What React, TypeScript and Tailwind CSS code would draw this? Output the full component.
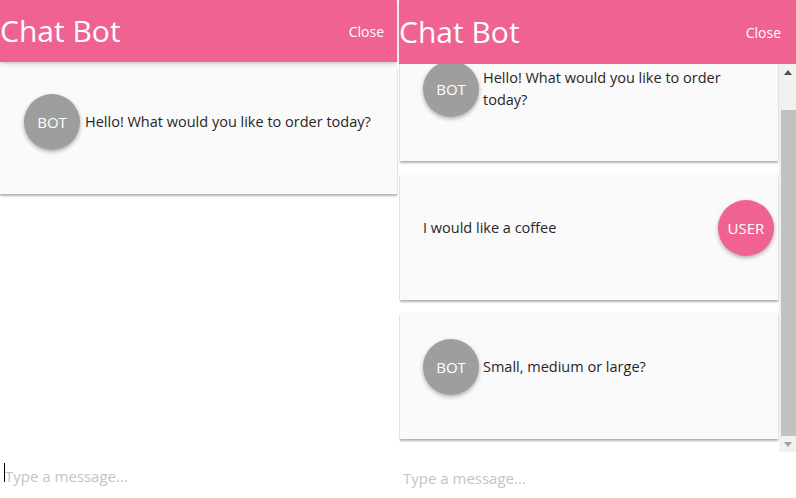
import React from "react";

function Avatar({ label, user }: { label: string; user?: boolean }) {
  return (
    <div
      className={
        user
          ? "flex h-14 w-14 shrink-0 items-center justify-center rounded-full bg-[#f06292] text-[15px] text-white shadow-[0_2px_4px_rgba(0,0,0,0.3)]"
          : "flex h-14 w-14 shrink-0 items-center justify-center rounded-full bg-[#9e9e9e] text-[15px] text-white shadow-[0_2px_4px_rgba(0,0,0,0.3)]"
      }
    >
      {label}
    </div>
  );
}

export default function App() {
  const card =
    "bg-[#fafafa] shadow-[0_0_1px_rgba(0,0,0,0.12),0_2px_2px_rgba(0,0,0,0.3)]";
  const msg = "text-[14.5px] leading-[22px] text-[#262626]";
  return (
    <div className="flex h-[498px] w-[796px] gap-[2px] overflow-hidden bg-white font-['Open_Sans',sans-serif]">
      {/* Left panel */}
      <div className="flex h-full w-[397px] flex-col">
        <div className="relative z-10 flex h-[62px] shrink-0 items-center justify-between bg-[#f06292] pr-[13px] shadow-[0_2px_4px_rgba(0,0,0,0.22)]">
          <h1 className="text-[30px] leading-[40px] text-white">Chat Bot</h1>
          <button className="text-[14px] text-white">Close</button>
        </div>
        <div className="flex-1 pt-[5px]">
          <div className={card + " h-[127px] pt-[27px]"}>
            <div className="flex items-center gap-[5px] pl-[24px] pr-[20px]">
              <Avatar label="BOT" />
              <p className={msg}>Hello! What would you like to order today?</p>
            </div>
          </div>
        </div>
        <div className="relative flex h-[44px] shrink-0 items-center">
          <span className="absolute left-[4px] top-[9px] h-[19px] w-px bg-black" />
          <input
            className="w-full bg-transparent pl-[5px] text-[15px] text-[#333] outline-none placeholder:text-[#c4c4c4]"
            placeholder="Type a message..."
          />
        </div>
      </div>

      {/* Right panel */}
      <div className="flex h-full flex-1 flex-col">
        <div className="relative z-10 flex h-[64px] shrink-0 items-center justify-between bg-[#f06292] pr-[15px]">
          <h1 className="text-[30px] leading-[40px] text-white">Chat Bot</h1>
          <button className="text-[14px] text-white">Close</button>
        </div>
        <div className="flex h-[388px] shrink-0">
          <div className="flex-1 overflow-hidden px-px">
            <div className={card + " -mt-[29px] h-[126px] pt-[26px]"}>
              <div className="flex items-center gap-[4px] pl-[23px] pr-[50px]">
                <Avatar label="BOT" />
                <p className={msg}>Hello! What would you like to order today?</p>
              </div>
            </div>
            <div className={card + " mt-[13px] h-[126px] pt-[26px]"}>
              <div className="flex items-center justify-between pl-[23px] pr-[4px]">
                <p className={msg}>I would like a coffee</p>
                <Avatar label="USER" user />
              </div>
            </div>
            <div className={card + " mt-[13px] h-[126px] pt-[26px]"}>
              <div className="flex items-center gap-[4px] pl-[23px] pr-[20px]">
                <Avatar label="BOT" />
                <p className={msg}>Small, medium or large?</p>
              </div>
            </div>
          </div>
          {/* scrollbar */}
          <div className="flex w-[17px] shrink-0 flex-col bg-[#f1f1f1]">
            <div className="flex h-[17px] shrink-0 items-center justify-center">
              <svg width="8" height="5" viewBox="0 0 8 5">
                <path d="M0 5 L4 0 L8 5 Z" fill="#505050" />
              </svg>
            </div>
            <div className="h-[29px] shrink-0" />
            <div className="ml-[2px] flex-1 bg-[#c1c1c1]" />
            <div className="flex h-[16px] shrink-0 items-center justify-center">
              <svg width="8" height="5" viewBox="0 0 8 5">
                <path d="M0 0 L8 0 L4 5 Z" fill="#a3a3a3" />
              </svg>
            </div>
          </div>
        </div>
        <div className="flex h-[46px] shrink-0 items-center pt-[6px]">
          <input
            className="w-full bg-transparent pl-[4px] text-[15px] text-[#333] outline-none placeholder:text-[#c4c4c4]"
            placeholder="Type a message..."
          />
        </div>
      </div>
    </div>
  );
}
